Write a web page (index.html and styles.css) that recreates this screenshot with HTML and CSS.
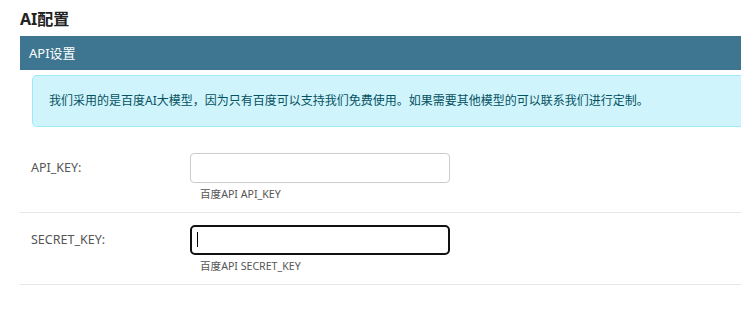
FILE: index.html
```html
<!DOCTYPE html>
<html lang="zh-CN">
<head>
  <meta charset="UTF-8">
  <title>AI配置</title>
  <meta name="viewport" content="width=device-width, initial-scale=1.0">
  <link rel="stylesheet" href="styles.css">
</head>
<body>
  <h2 class="page-title">AI配置</h2>
  <div class="panel">
    <div class="panel-heading">API设置</div>
    <div class="panel-body">
      <div class="alert-info">我们采用的是百度AI大模型，因为只有百度可以支持我们免费使用。如果需要其他模型的可以联系我们进行定制。</div>

      <div class="form-row">
        <label class="form-label" for="apiKey">API_KEY:</label>
        <div class="form-field">
          <input type="text" id="apiKey" class="form-input">
          <div class="help">百度API API_KEY</div>
        </div>
      </div>

      <div class="form-row">
        <label class="form-label" for="secretKey">SECRET_KEY:</label>
        <div class="form-field">
          <div class="input-wrap">
            <input type="text" id="secretKey" class="form-input is-focus">
            <span class="caret"></span>
          </div>
          <div class="help">百度API SECRET_KEY</div>
        </div>
      </div>
    </div>
  </div>
</body>
</html>
```

FILE: styles.css
```css
body {
  margin: 0;
  padding: 8px 0 8px 20px;
  font-family: "Noto Sans", "Noto Sans CJK SC", sans-serif;
  color: #333;
  background: #fff;
}
.page-title {
  margin: 0 0 6px;
  font-size: 16px;
  line-height: 22px;
  font-weight: bold;
  color: #222;
}
.panel-heading {
  background-color: #3e7691;
  color: #fff;
  font-size: 13px;
  line-height: 34px;
  height: 34px;
  padding-left: 9px;
}
.panel-body {
  padding-top: 5px;
}
.alert-info {
  margin: 0 0 14px 12px;
  padding: 16px;
  background-color: #cff4fc;
  border: 1px solid #9eeaf9;
  border-right: none;
  border-radius: 5px 0 0 5px;
  color: #055160;
  font-size: 12px;
  line-height: 18px;
}
.form-row {
  display: flex;
  align-items: flex-start;
  padding: 12px 0 10px 11px;
  border-bottom: 1px solid #e6e6e6;
}
.form-label {
  width: 159px;
  font-size: 12.5px;
  line-height: 30px;
  color: #555;
}
.form-field {
  width: 260px;
}
.form-input {
  display: block;
  box-sizing: border-box;
  width: 260px;
  height: 30px;
  margin: 0;
  border: 1px solid #ccc;
  border-radius: 4px;
  background: #fff;
  outline: none;
}
.form-input.is-focus {
  border: 2px solid #111;
  border-radius: 5px;
}
.input-wrap {
  position: relative;
}
.caret {
  position: absolute;
  left: 7px;
  top: 7px;
  width: 1px;
  height: 15px;
  background: #000;
}
.help {
  margin-top: 3px;
  padding-left: 10px;
  font-size: 10.6px;
  line-height: 16px;
  color: #555;
}
```
